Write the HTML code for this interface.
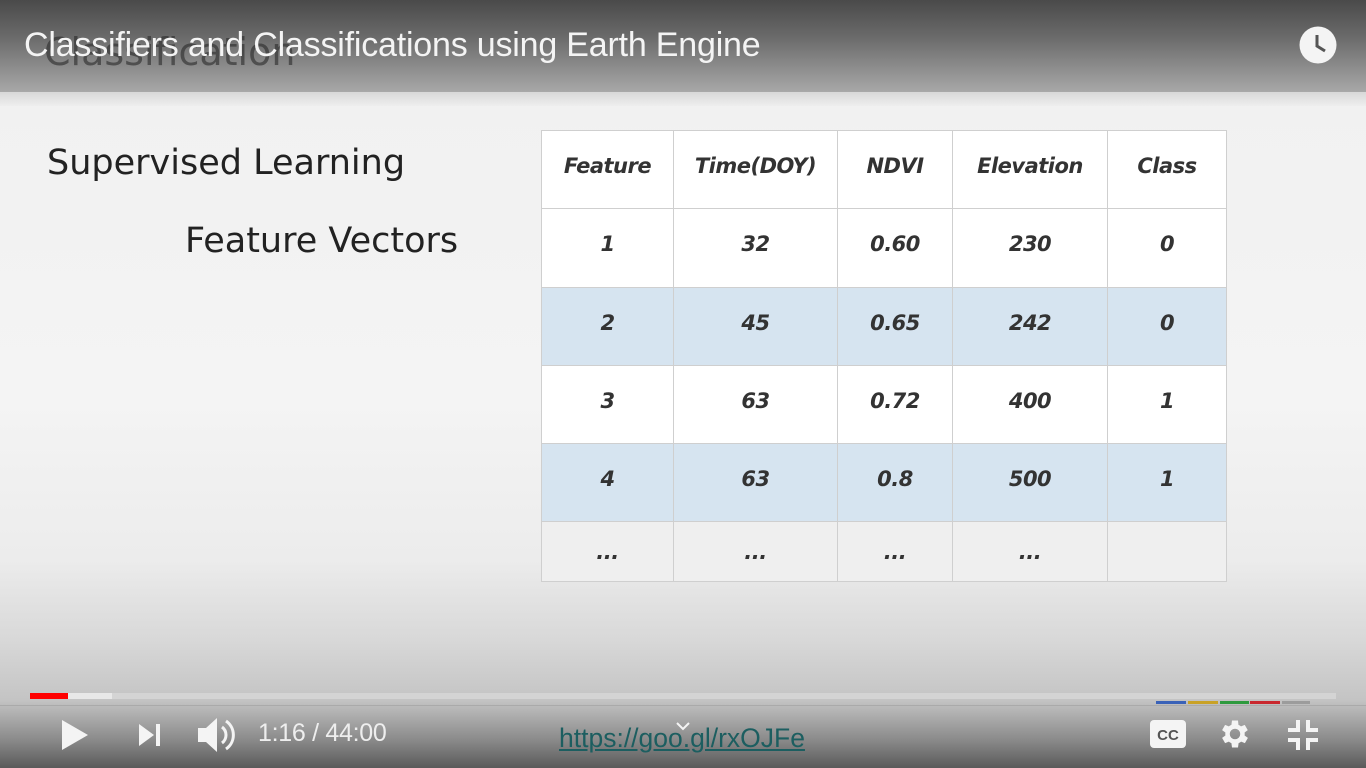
<!DOCTYPE html>
<html><head><style>
html,body{margin:0;padding:0;width:1366px;height:768px;overflow:hidden;background:#f2f2f2;font-family:"Liberation Sans",sans-serif;}
#stage{position:absolute;left:0;top:0;width:1366px;height:768px;background:linear-gradient(#f0f0f0 0,#f4f4f4 400px,#ececec 560px,#d8d8d8 640px,#c4c4c4 700px,#8a8a8a 740px,#5a5a5a 768px);}
#top{position:absolute;left:0;top:0;width:1366px;height:92px;background:linear-gradient(#4a4a4a,#6a6a6a 40%,#a8a8a8 100%);}
#topline{position:absolute;left:0;top:92px;width:1366px;height:14px;background:linear-gradient(#d8d8d8,#eeeeee);}
.ghost{position:absolute;left:44px;top:30px;font-size:38px;color:#2a2a2a;opacity:.6;font-family:"DejaVu Sans",sans-serif;}
.title{position:absolute;left:24px;top:26px;font-size:34px;color:#f4f4f4;letter-spacing:-0.2px;}
.slidetxt{position:absolute;font-family:"DejaVu Sans",sans-serif;font-size:35px;color:#222;}
table{position:absolute;left:541px;top:130px;border-collapse:collapse;table-layout:fixed;width:685px;font-family:"DejaVu Sans",sans-serif;font-style:italic;font-weight:bold;font-size:21px;color:#333;letter-spacing:-0.5px;}
td{border:1.5px solid #cfcfcf;text-align:center;padding:0 0 8px 0;background:#fff;}
tr.l td{padding:0;}
tr.b td{background:#d6e4f0;}
tr.l td{background:#efefef;}
#bar{position:absolute;left:30px;top:693px;width:1306px;height:6px;background:#d4d4d4;}
#bar .buf{position:absolute;left:0;top:0;width:82px;height:6px;background:#e8e8e8;}
#bar .pl{position:absolute;left:0;top:0;width:38px;height:6px;background:#f00;}
.ctl{position:absolute;}
.time{position:absolute;left:258px;top:719px;font-size:25px;color:#eee;letter-spacing:-0.3px;}
.link{position:absolute;left:559px;top:723px;font-size:26.5px;color:#1c5e60;text-decoration:underline;}
</style></head><body>
<div id="stage"></div>
<div id="top"></div>
<div id="topline"></div>
<div class="ghost">Classification</div>
<div class="title">Classifiers and Classifications using Earth Engine</div>
<svg class="ctl" style="left:1299px;top:26px" width="38" height="38" viewBox="0 0 38 38"><circle cx="19" cy="19" r="18.5" fill="#f4f4f4"/><path d="M18 9v11l8 5" stroke="#555" stroke-width="3" fill="none"/></svg>
<div class="slidetxt" style="left:47px;top:143px">Supervised Learning</div>
<div class="slidetxt" style="left:185px;top:221px">Feature Vectors</div>
<table>
<colgroup><col style="width:132px"><col style="width:164px"><col style="width:115px"><col style="width:155px"><col style="width:119px"></colgroup>
<tr style="height:78px"><td>Feature</td><td>Time(DOY)</td><td>NDVI</td><td>Elevation</td><td>Class</td></tr>
<tr style="height:79px"><td>1</td><td>32</td><td>0.60</td><td>230</td><td>0</td></tr>
<tr class="b" style="height:78px"><td>2</td><td>45</td><td>0.65</td><td>242</td><td>0</td></tr>
<tr style="height:78px"><td>3</td><td>63</td><td>0.72</td><td>400</td><td>1</td></tr>
<tr class="b" style="height:78px"><td>4</td><td>63</td><td>0.8</td><td>500</td><td>1</td></tr>
<tr class="l" style="height:60px"><td>...</td><td>...</td><td>...</td><td>...</td><td></td></tr>
</table>
<div id="bar"><div class="buf"></div><div class="pl"></div></div>
<div style="position:absolute;left:1156px;top:701px;width:30px;height:3px;background:#3a62b8"></div>
<div style="position:absolute;left:1188px;top:701px;width:30px;height:3px;background:#c9a227"></div>
<div style="position:absolute;left:1220px;top:701px;width:29px;height:3px;background:#2e9a3e"></div>
<div style="position:absolute;left:1250px;top:701px;width:30px;height:3px;background:#c9282e"></div>
<div style="position:absolute;left:1282px;top:701px;width:28px;height:3px;background:#9c9c9c"></div>
<div style="position:absolute;left:0;top:705px;width:1366px;height:1px;background:#aaa"></div>
<svg class="ctl" style="left:60px;top:718px" width="30" height="34"><path d="M2 2L28 17L2 32Z" fill="#f4f4f4"/></svg>
<svg class="ctl" style="left:137px;top:722px" width="26" height="26"><path d="M2 2L17 13L2 24Z" fill="#f4f4f4"/><rect x="19" y="2" width="4" height="22" fill="#f4f4f4"/></svg>
<svg class="ctl" style="left:196px;top:716px" width="40" height="38"><path d="M2 12h8l11-10v34L10 26H2Z" fill="#f4f4f4"/><path d="M26 11a10 10 0 0 1 0 16" stroke="#f4f4f4" stroke-width="3" fill="none"/><path d="M30 5a17 17 0 0 1 0 28" stroke="#f4f4f4" stroke-width="3" fill="none"/></svg>
<div class="time">1:16 / 44:00</div>
<div class="link">https://goo.gl/rxOJFe</div>
<svg class="ctl" style="left:676px;top:722px" width="14" height="10"><path d="M1 1l6 6 6-6" stroke="#f4f4f4" stroke-width="2" fill="none"/></svg>
<svg class="ctl" style="left:1150px;top:720px" width="36" height="28"><rect x="0" y="0" width="36" height="28" rx="4" fill="#f4f4f4"/><text x="18" y="20" text-anchor="middle" font-family="Liberation Sans" font-weight="bold" font-size="15" fill="#555">CC</text></svg>
<svg class="ctl" style="left:1217px;top:716px" width="36" height="36" viewBox="0 0 24 24"><path fill="#f4f4f4" d="M19.4 13a7.5 7.5 0 0 0 0-2l2.1-1.6-2-3.5-2.5 1a7 7 0 0 0-1.7-1L15 3h-4l-.4 2.9a7 7 0 0 0-1.7 1l-2.5-1-2 3.5L6.6 11a7.5 7.5 0 0 0 0 2l-2.2 1.6 2 3.5 2.5-1a7 7 0 0 0 1.7 1L11 21h4l.4-2.9a7 7 0 0 0 1.7-1l2.5 1 2-3.5ZM13 15.5a3.5 3.5 0 1 1 0-7 3.5 3.5 0 0 1 0 7Z" transform="translate(-1 0)"/></svg>
<svg class="ctl" style="left:1286px;top:718px" width="34" height="34"><g fill="none" stroke="#f4f4f4" stroke-width="4"><path d="M12 2v10H2"/><path d="M22 2v10h10"/><path d="M2 22h10v10"/><path d="M32 22H22v10"/></g></svg>
</body></html>
